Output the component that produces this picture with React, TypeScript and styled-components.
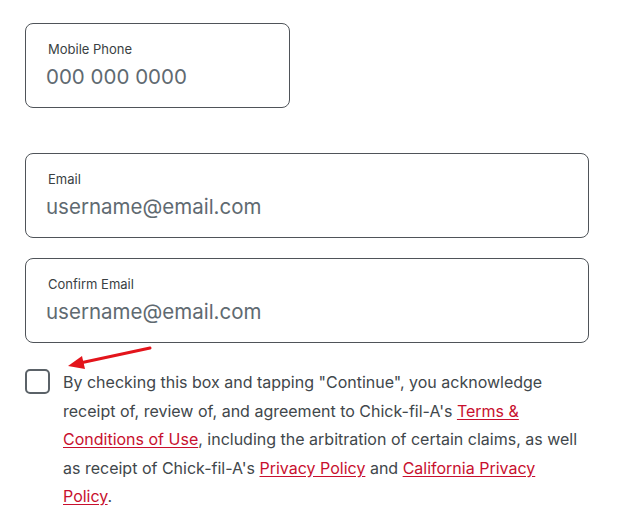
import { FC } from "react"
import styled, { createGlobalStyle } from "styled-components"

const GlobalStyle = createGlobalStyle`
  body {
    margin: 0;
    background: #fff;
    font-family: Inter, "Noto Sans", "Liberation Sans", sans-serif;
  }
`

const COLOR = {
  text: "#41474b",
  label: "#3a3f43",
  placeholder: "#5f6a71",
  border: "#4f5459",
  link: "#c8102e",
  arrow: "#e3141b",
}

const Page = styled.div`
  position: relative;
  width: 564px;
  padding: 23px 0 0 25px;
`

const Field = styled.div<{ $width?: number; $mt?: number }>`
  box-sizing: border-box;
  width: ${(p) => (p.$width ? `${p.$width}px` : "100%")};
  height: 85px;
  margin-top: ${(p) => p.$mt ?? 0}px;
  border: 1px solid ${COLOR.border};
  border-radius: 8px;
  padding: 16px 20px 0 20px;
  display: flex;
  flex-direction: column;
  gap: 5px;
`

const Label = styled.span`
  font-size: 13px;
  line-height: 18px;
  color: ${COLOR.label};
  padding-left: 2px;
`

const Placeholder = styled.span`
  font-size: 20.5px;
  line-height: 28px;
  color: ${COLOR.placeholder};
`

const Consent = styled.div`
  display: flex;
  align-items: flex-start;
  gap: 13px;
  margin-top: 26px;
`

const Box = styled.span`
  flex: none;
  box-sizing: border-box;
  width: 25px;
  height: 25px;
  border: 2px solid #5b6268;
  border-radius: 5px;
`

const Copy = styled.p`
  margin: -1px 0 0 0;
  width: 522px;
  font-size: 16px;
  line-height: 28.5px;
  color: ${COLOR.text};
`

const Link = styled.a`
  color: ${COLOR.link};
  text-decoration: underline;
  text-underline-offset: 2px;
`

const Arrow = styled.svg`
  position: absolute;
  left: 60px;
  top: 340px;
`

const InputField: FC<{ label: string; placeholder: string; width?: number; mt?: number }> = ({
  label,
  placeholder,
  width,
  mt,
}) => (
  <Field $width={width} $mt={mt}>
    <Label>{label}</Label>
    <Placeholder>{placeholder}</Placeholder>
  </Field>
)

export default function App() {
  return (
    <>
      <GlobalStyle />
      <Page>
        <InputField label="Mobile Phone" placeholder="000 000 0000" width={265} />
        <InputField label="Email" placeholder="username@email.com" mt={45} />
        <InputField label="Confirm Email" placeholder="username@email.com" mt={20} />
        <Consent>
          <Box />
          <Copy>
            By checking this box and tapping "Continue", you acknowledge receipt of, review of, and
            agreement to Chick-fil-A's <Link href="#">Terms &amp; Conditions of Use</Link>, including the
            arbitration of certain claims, as well as receipt of Chick-fil-A's{" "}
            <Link href="#">Privacy Policy</Link> and <Link href="#">California Privacy Policy</Link>.
          </Copy>
        </Consent>
        <Arrow width="100" height="32" viewBox="0 0 100 32">
          <line x1="90" y1="8" x2="20" y2="23" stroke={COLOR.arrow} strokeWidth="3" strokeLinecap="round" />
          <polygon points="8,26 22,16 25,29" fill={COLOR.arrow} />
        </Arrow>
      </Page>
    </>
  )
}
